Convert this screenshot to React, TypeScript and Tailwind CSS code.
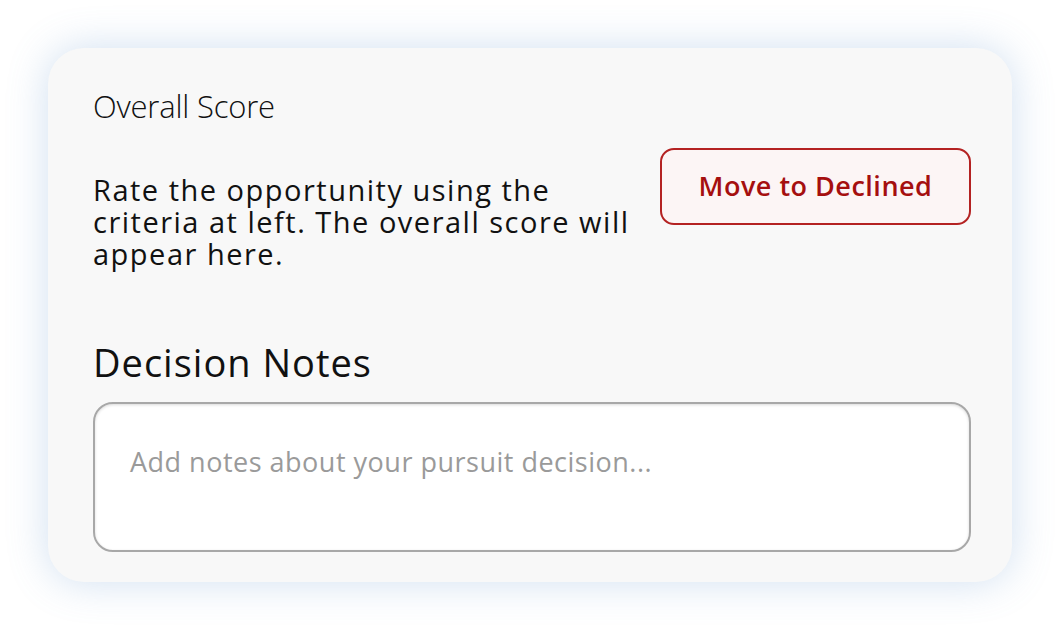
export default function App() {
  return (
    <div className="w-[1060px] h-[630px] bg-white p-[48px] font-['Open_Sans',sans-serif]">
      <div className="w-[964px] h-[534px] bg-[#f8f8f8] rounded-[36px] shadow-[0_0_40px_rgba(100,150,205,0.3)] pl-[45px] pr-[41px] pt-[42px] flex flex-col">
        <div className="flex justify-between">
          <div className="flex flex-col">
            <h2 className="text-[31px] leading-[32px] font-light text-[#111] tracking-[-0.2px]">Overall Score</h2>
            <p className="mt-[52px] w-[548px] text-[29px] leading-[32px] text-[#111] tracking-[1.5px]">
              Rate the opportunity using the criteria at left. The overall score will appear here.
            </p>
          </div>
          <button className="mt-[58px] w-[311px] h-[77px] rounded-[14px] border-2 border-[#b42222] bg-[#fcf5f5] text-[#a50f0f] text-[27px] font-semibold tracking-[0.5px]">
            Move to Declined
          </button>
        </div>
        <h3 className="mt-[69px] text-[38px] leading-[46px] text-[#111] font-normal tracking-[1px]">Decision Notes</h3>
        <textarea
          className="mt-[17px] h-[150px] w-full resize-none rounded-[20px] border-2 border-[#a8a8a8] bg-white px-[35px] pt-[41px] text-[27px] leading-[34px] tracking-[0.5px] text-[#333] placeholder:text-[#9a9a9a] shadow-[inset_0_1px_3px_rgba(0,0,0,0.15)] outline-none"
          placeholder="Add notes about your pursuit decision..."
        />
      </div>
    </div>
  );
}
